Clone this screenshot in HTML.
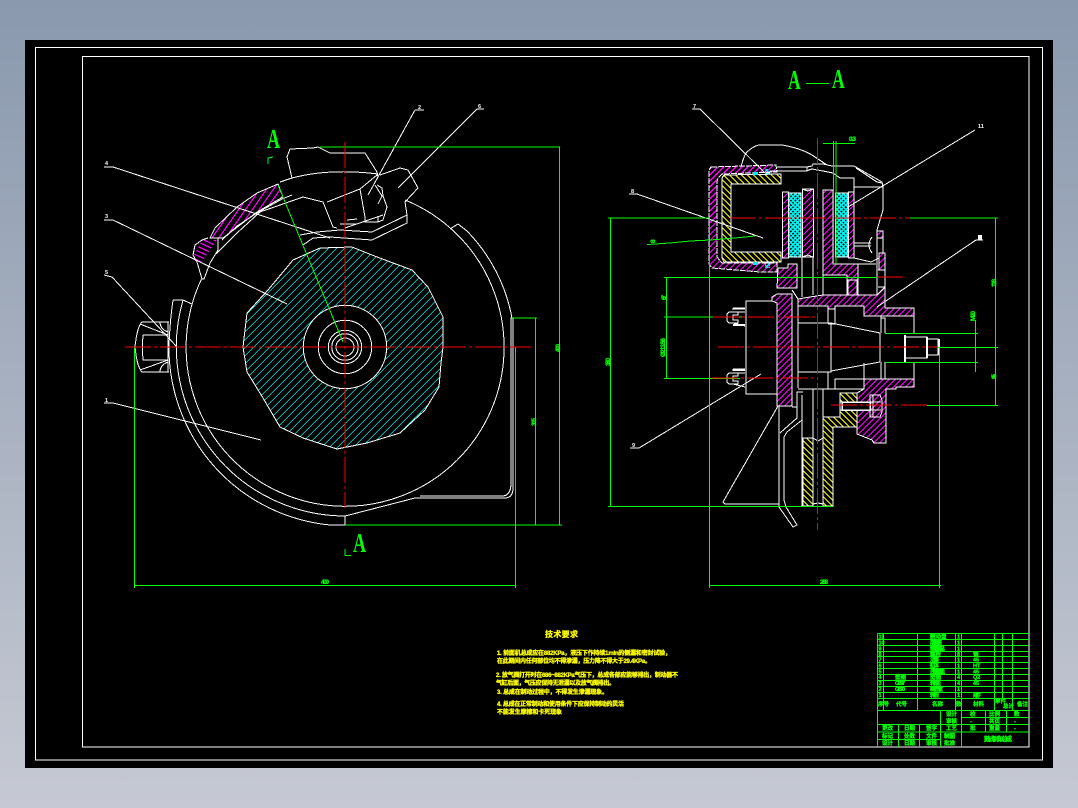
<!DOCTYPE html>
<html><head><meta charset="utf-8"><title>CAD</title>
<style>
html,body{margin:0;padding:0;width:1078px;height:808px;overflow:hidden;background:linear-gradient(#8a99ae,#c6c9d3)}
svg{position:absolute;left:0;top:0}
text{font-family:"Liberation Sans","Noto Sans CJK SC",sans-serif;font-weight:bold}
.w{fill:none;stroke:#fff;stroke-width:1}
.g{fill:none;stroke:#0f0;stroke-width:1}
.r{fill:none;stroke:#f00;stroke-width:1;stroke-dasharray:26 3 3 3}
.t{fill:#0f0;stroke:#0f0;stroke-width:.3;font-size:5.5px}
.l{fill:#fff;font-size:5.5px}
.y{fill:#ff0;stroke:#ff0;stroke-width:.3;font-size:6px}
.dim{fill:#0f0;stroke:#0f0;stroke-width:.3;font-size:6.5px}
.big{font-family:"Liberation Serif",serif;font-size:27px;fill:#0f0}
</style></head><body>
<svg width="1078" height="808" viewBox="0 0 1078 808" shape-rendering="crispEdges" xmlns="http://www.w3.org/2000/svg">
<defs>
<clipPath id="cc"><path d="M243 347L247 313L268 290L293 260L320 248L352 247L377 257L412 270L428 287L443 317L443 347L441 363L439 387L425 410L400 433L367 443L337 449L303 438L280 427L263 398L247 372Z"/></clipPath>
<clipPath id="cm1"><path d="M210 238L215 228L237 207L257 193L278 184L283 197L257 212L223 238Z"/></clipPath>
<clipPath id="cm2"><path d="M193 257L202 240L217 240L200 265Z"/></clipPath>
<clipPath id="cm">
<path d="M711 167L776 165L777 172L722 174L718 178L717 182L717 257L722 263L777 263L777 272L760 272L712 268L709 264L709 170Z"/>
<path d="M823 190L833 190L833 264L858 264L858 295L847 295L847 275L823 275Z"/>
<path d="M778 268L788 268L788 264L797 264L797 288L777 288Z"/>
<path d="M877 231H883V238H877Z"/>
<path d="M879 253H885V270H879Z"/>
<path d="M798 299L810 297L823 295L877 295L885 287L885 308L914 308L914 316L864 316L864 306L835 306L835 309L828 309L828 306L798 306Z"/>
<path d="M864 379L914 379L914 387L896 387L896 389L886 389L886 443L874 443L872 440L857 434L857 393L864 389Z"/>
<path d="M848 280H857V295H848Z"/>
<path d="M772 297L777 294L792 294L792 406L777 406L777 303L772 301Z"/>
</clipPath>
<clipPath id="cy">
<path d="M724 175L781 174L781 184L731 184L731 252L781 252L781 262L724 262L722 258L722 178Z"/>
<path d="M840 393H857V402H840Z"/>
<path d="M840 410H857V427H833V506H823V417H840Z"/>
<rect x="803" y="438" width="10" height="68"/>
</clipPath>
<clipPath id="cx">
<rect x="788.5" y="193" width="12.5" height="64"/>
<rect x="835.5" y="193" width="12.5" height="64"/>
<rect x="765" y="169" width="5" height="6"/>
<rect x="765" y="262" width="5" height="6"/>
</clipPath>
</defs>
<rect x="25" y="40" width="1028" height="728" fill="#000"/>
<rect x="35.5" y="47.5" width="1007" height="712.5" fill="none" stroke="#fff"/>
<rect x="82.5" y="56.5" width="946.5" height="690.5" fill="none" stroke="#fff"/>

<!-- LEFT VIEW -->
<path clip-path="url(#cc)" d="M180 180L520 520" stroke="#0ee" stroke-width="500" stroke-dasharray=".8 4.86" fill="none"/>
<path d="M243 347L247 313L268 290L293 260L320 248L352 247L377 257L412 270L428 287L443 317L443 347L441 363L439 387L425 410L400 433L367 443L337 449L303 438L280 427L263 398L247 372Z" fill="none" stroke="#fff"/>
<circle cx="345" cy="347" r="41.7" fill="#000" stroke="#fff"/>
<circle cx="345" cy="347" r="26.7" class="w"/>
<circle cx="345" cy="347" r="16.7" class="w"/>
<circle cx="345" cy="347" r="13.3" class="w"/>
<circle cx="345" cy="347" r="9" class="w"/>
<path class="w" d="M405 200A159 159 0 1 1 202 278"/>
<path class="w" d="M183 300A169 169 0 0 0 345 516L349 515L415 498L506 498Q513 497 513 488L513 318"/>
<path class="w" d="M420 496L502 496Q511 496 511 483L511 318L513 318"/>
<path class="w" d="M173 300Q170 320 169 345A178 178 0 0 0 330 525L345 525L345 516"/>
<path class="w" d="M173 300L183 300L192 304"/>
<path class="w" d="M450 229L458 224L467 231A169 169 0 0 1 512 318"/>
<!-- bolt -->
<path class="w" d="M169 322L142 322Q137 327 135 347Q137 367 142 372L169 372M143 335L168 335L168 360L143 360Q142 347 143 335M140 324L168 335M140 370L168 360M168 322L168 335M168 360L168 372M160 372Q160 365 168 362M160 322Q160 329 168 332"/>
<!-- top cap -->
<path class="w" d="M292 178L287 157L290 149L313 148L318 147L330 153L365 153L377 172L378 177"/>
<path class="w" d="M280 182L292 178Q330 168 378 174"/>
<path class="w" d="M380 175L400 168L408 170L418 188L405 202L407 215L407 223L372 240L330 237L313 238L303 245"/>
<path class="w" d="M407 215L372 232L340 230L317 232L300 235"/>
<path clip-path="url(#cm1)" d="M185 168L305 252" stroke="#f0f" stroke-width="120" stroke-dasharray="1.2 4.4" fill="none"/>
<path clip-path="url(#cm2)" d="M212 220L190 268" stroke="#f0f" stroke-width="70" stroke-dasharray="1.2 3" fill="none"/>
<path class="w" d="M210 238L215 228L237 207L257 193L278 184L283 197L257 212L223 238Z"/>
<path class="w" d="M208 238L202 240L195 245L193 255L197 262L202 279L204 279L210 263L218 250L218 238M222 240L237 226L257 213L282 199L292 195M216 254L237 233L260 212L303 197L323 202L333 227L337 228"/>
<path class="w" d="M327 202L360 189L365 217L365 222L378 222L378 216M360 189L377 175M377 185L382 188L383 196L387 207L383 220L378 222M375 185L382 196L378 204M345 228L383 215M347 220L357 219M340 224L357 224"/>
<!-- leaders left -->
<path class="w" d="M104 167L113 167L330 238M104 220L113 220L287 304M104 275L112 277L177 347M415 110L424 110M415 110L368 195M477 109L484 109M477 109L398 188M104 403L113 403L261 440"/>
<text class="l" x="105" y="165">4</text><text class="l" x="105" y="218">3</text><text class="l" x="105" y="274">5</text><text class="l" x="418" y="109">2</text><text class="l" x="478" y="108">6</text><text class="l" x="105" y="402">1</text>
<!-- green left -->
<path class="g" d="M320 147L560 147M559.5 147L559.5 525M345 525L562 525M535.5 318L535.5 525M512 318L537 318M134.5 347L134.5 588M515.5 347L515.5 588M134 585.5L516 585.5M278 185L343 342M268 164L268 158L273 157M345 549L345 555.5L351 555.5"/>
<text class="big" transform="translate(267 148) scale(.67 1)">A</text>
<text class="big" transform="translate(353 552) scale(.67 1)">A</text>
<text class="dim" x="321" y="584" textLength="8">400</text>
<text class="dim" transform="translate(536 426) rotate(-90)" textLength="8">305</text>
<text class="dim" transform="translate(560 352) rotate(-90)" textLength="8">400</text>
<path class="r" d="M125 347H531M345 142V508"/>

<!-- TITLE A-A -->
<text class="big" transform="translate(788 89) scale(.65 1)">A</text>
<text class="big" transform="translate(832 88) scale(.65 1)">A</text>
<path class="g" d="M806 83.5H829"/>

<!-- RIGHT VIEW -->
<path class="w" d="M741 167Q744 155 747 152Q755 145 760 145L782 145Q800 148 812 155L827 165"/>
<path clip-path="url(#cm)" d="M560 60L1010 510" stroke="#f0f" stroke-width="900" stroke-dasharray="1.2 3.04" fill="none"/>
<path clip-path="url(#cy)" d="M560 600L1010 150" stroke="#ff0" stroke-width="900" stroke-dasharray="1.2 3.04" fill="none"/>
<path clip-path="url(#cx)" d="M560 60L1010 510" stroke="#0ee" stroke-width="900" stroke-dasharray="1.6 1.5" fill="none"/>
<path clip-path="url(#cx)" d="M560 600L1010 150" stroke="#0ee" stroke-width="900" stroke-dasharray="1.6 1.5" fill="none"/>
<!-- narrow friction-disc hatching drawn explicitly -->
<path fill="none" stroke="#f0f" d="M803 199l10-10M803 205l10-10M803 211l10-10M803 217l10-10M803 223l10-10M803 229l10-10M803 235l10-10M803 241l10-10M803 247l10-10M803 253l10-10M806 256l7-7"/>
<path fill="none" stroke="#f0f" d="M783 198l5-5M783 204l5-5M783 210l5-5M783 216l5-5M783 222l5-5M783 228l5-5M783 234l5-5M783 240l5-5M783 246l5-5M783 252l5-5M783 258l5-5"/>
<path fill="none" stroke="#f0f" d="M849 198l5-5M849 204l5-5M849 210l5-5M849 216l5-5M849 222l5-5M849 228l5-5M849 234l5-5M849 240l5-5M849 246l5-5M849 252l5-5M849 258l5-5"/>
<path class="w" stroke-dasharray="6 1" d="M711 167L776 165L777 172L722 174L718 178L717 182L717 257L722 263L777 263L777 272L760 272L712 268L709 264L709 170Z"/>
<path class="w" d="M724 175L781 174L781 184L731 184L731 252L781 252L781 262L724 262L722 258L722 178Z"/>
<rect x="753" y="172" width="5" height="3" fill="#0ee"/>
<rect x="753" y="262" width="5" height="3" fill="#0ee"/>
<rect x="782.5" y="192" width="6" height="66" class="w"/>
<rect x="788.5" y="193" width="12.5" height="64" class="w"/>
<rect x="802.5" y="189" width="11" height="68" class="w"/>
<rect x="835.5" y="193" width="12.5" height="64" class="w"/>
<rect x="848.5" y="192" width="5.5" height="66" class="w"/>
<path class="w" d="M823 190L833 190L833 264L858 264L858 295L847 295L847 275L823 275Z"/>
<path class="w" d="M778 268L788 268L788 264L797 264L797 288L777 288Z"/>
<path class="w" d="M777 167L807 167L807 171L777 171M807 167L812 166L813 164L823 164L832 166L854 166L882 182L883 187L883 210L880 220L877 230M770 171L806 171L812 169L823 171L833 173L840 178L854 178L854 258M856 168L877 182L882 183M854 187L883 187"/>
<path class="w" d="M802 257V297M813 257V295M823 275V295M802 189L808 191L813 189M802 257L808 255L813 257"/>
<path class="w" d="M877 231H883V238H877Z"/>
<path class="w" d="M879 253H885V270H879Z"/>
<path class="w" d="M854 243L871 243M854 246L871 246M872 237Q866 245 872 253M877 230L877 295M883 238L883 253M854 264L876 264M854 258L871 262L879 258M878 270H885V287H878"/>
<path class="w" d="M798 299L810 297L823 295L877 295L885 287L885 308L914 308L914 316L885 316L881 316L864 316L864 306L835 306L835 309L828 309L828 306L798 306Z"/>
<path class="w" d="M864 379L914 379L914 387L896 387L896 389L886 389L886 443L874 443L872 440L857 434L857 393L864 389Z"/>
<path class="w" d="M848 280H857V295H848Z"/>
<path class="w" d="M772 297L777 294L792 294L792 406L777 406L777 303L772 301Z"/>
<path class="w" d="M772 301L746 301L746 394L777 394"/>
<path class="w" d="M792 290L798 299L798 388M798 306H828V323H798M798 323H831V372H798M798 372H828V389H798M828 309H835V324H828M835 306H864V316M831 323L880 333M831 371L880 362M864 316H881V333M881 318H885V333M880 333V362M914 316V333M914 362V379M881 362V379H885V362M864 363V379H835V389H828V372M835 389H864"/>
<path class="w" d="M840 393H857V402H840Z"/>
<path class="w" d="M840 410H857V427H833V506H823V417H840Z"/>
<rect x="803" y="438" width="10" height="68" class="w"/>
<path d="M842 402H870V410H842Z" fill="#000" stroke="#fff" stroke-width="1.5"/>
<path class="w" d="M840 402V410M870 395H880L882 400V412L880 417H870ZM873 395V417M870 402H881M870 410H881"/>
<path class="w" d="M778 406L723 502L725 504L779 504M779 406V507M779 507L793 527L797 525L786 507L784 500L784 437L787 432L802 420M780 433L797 418L797 392L803 392M792 407H797M802 395V506M813 389V438M823 389V417M813 438L818 441L823 438M813 504L818 503L823 504M802 389H823"/>
<path class="w" d="M745 309H732M745 312H729L727 314V321L729 323H738V320H733V315H738V312M733 308H745M733 323L745 326"/><rect x="733" y="324" width="12" height="2" fill="#fff"/>
<path class="w" d="M745 370H732M745 373H729L727 375V382L729 384H738V381H733V376H738V373M733 369H745M733 384L745 387"/><rect x="733" y="369" width="12" height="2" fill="#fff"/>
<!-- shaft end -->
<path fill="none" stroke="#fff" stroke-width="1" d="M905 337H927V358H905M927 339H938V355H927"/>
<path fill="none" stroke="#fff" stroke-width="2" d="M905 335V362M927 337V358M939 339V355"/>
<!-- leaders right -->
<path class="w" d="M692 109H700L765 173M629 194H637L763 238M630 448H639L761 374M975 130L848 207M976 240H983M976 240L877 307"/>
<text class="l" x="693" y="108">7</text><text class="l" x="631" y="193">8</text><text class="l" x="632" y="447">9</text><text class="l" x="978" y="128">11</text><rect x="978" y="235" width="4" height="5" fill="#fff"/>
<!-- green right -->
<path class="g" d="M610.5 218V507M608 218H710M608 506.5H833M709.5 218V588M709 585.5H941M939.5 347V588M664 317H745M666.5 277V379M664 277.5H877M664 378.5H740M833.5 141V264M836 141V264M823 143.5H855M647 244.5L670 243L690 241L710 240L735 238L755 236M910 218H998M995.5 218V405M927 405.5H998M975.5 320V372M885 333.5H978M885 362.5H978M938 347.5H998"/>
<text class="dim" transform="translate(610 366) rotate(-90)" textLength="8">380</text>
<text class="dim" x="820" y="584" textLength="8">288</text>
<text class="dim" transform="translate(665 357) rotate(-90)" textLength="19">Ø213.56</text>
<text class="dim" transform="translate(666 300) rotate(-90)" textLength="5">67</text>
<text class="dim" transform="translate(655 243) rotate(-90)">8</text>
<text class="dim" x="849" y="141" textLength="7">0.3</text>
<text class="dim" transform="translate(996 287) rotate(-90)" textLength="8">118</text>
<text class="dim" transform="translate(996 379) rotate(-90)" textLength="5">85</text>
<text class="dim" transform="translate(975 321) rotate(-90)" textLength="10">M20</text>
<path class="r" d="M730 218H910M877 277H905M713 317H815M718 347H938M712 378H815M831 405H927M817.5 138V530"/>

<!-- TECH TEXT -->
<text class="y" x="545" y="637" textLength="33" style="font-size:8px">技术要求</text>
<text class="y" x="497" y="655" textLength="174">1. 前面机总成应在882KPa，液压下作持续1min的侧漏和密封试验，</text>
<text class="y" x="497" y="663" textLength="154">在此期间内任何部位均不得渗漏，压力降不得大于29.4KPa。</text>
<text class="y" x="496" y="677" textLength="182">2. 放气阀打开时在686~882KPa气压下，总成各部应能够排出，制动器不</text>
<text class="y" x="496" y="685" textLength="119">气缸后面，气压应保持无泄漏以及放气阀排出。</text>
<text class="y" x="497" y="694" textLength="111">3. 总成在制动过程中，不得发生渗漏现象。</text>
<text class="y" x="497" y="706" textLength="127">4. 总成在正常制动和使用条件下应保持制动的灵活</text>
<text class="y" x="497" y="714" textLength="65">不能发生摩擦和卡死现象</text>

<!-- TITLE BLOCK -->
<path class="g" d="M877.5 633.5H1029M877.5 639.5H1029M877.5 645.5H1029M877.5 651.5H1029M877.5 656.5H1029M877.5 662.5H1029M877.5 668.5H1029M877.5 674.5H1029M877.5 680.5H1029M877.5 686.5H1029M877.5 692.5H1029M877.5 698.5H1029M877.5 710.5H1029M883.5 633.5V710M917.5 633.5V710M955.5 633.5V710M961.5 633.5V747M994.5 633.5V710M1002.5 633.5V698M1012.5 633.5V710M877.5 633.5V747M877.5 724.5H961M877.5 732H961M877.5 739.5H940M898.5 724.5V747M919.5 724.5V747M940.5 710V747M961.5 717.5H1029M961.5 724.5H1029M961.5 732H1029M985.5 710V732M1006.5 710V732"/>
<g>
<text class="t" x="930" y="638.5">制动盘</text><text class="t" x="930" y="644.5" textLength="12">摩擦片座</text><text class="t" x="930" y="650.5" textLength="15">制动钳体总</text><text class="t" x="930" y="656">螺栓</text><text class="t" x="930" y="661.5" textLength="9">活塞</text><text class="t" x="930" y="667.5" textLength="9">缸体</text><text class="t" x="930" y="673.5" textLength="15">连接螺栓组</text><text class="t" x="930" y="679">垫圈</text><text class="t" x="930" y="685" textLength="11">轮毂盖</text><text class="t" x="930" y="691" textLength="13">制动气室</text><text class="t" x="930" y="697" textLength="9">轮毂</text>
<text class="t" x="878.5" y="638.5">11</text><text class="t" x="878.5" y="644.5">10</text><text class="t" x="878.5" y="650.5">9</text><text class="t" x="878.5" y="656">8</text><text class="t" x="878.5" y="661.5">7</text><text class="t" x="878.5" y="667.5">6</text><text class="t" x="878.5" y="673.5">5</text><text class="t" x="878.5" y="679">4</text><text class="t" x="878.5" y="685">3</text><text class="t" x="878.5" y="691">2</text><text class="t" x="878.5" y="697">1</text>
<text class="t" x="957" y="638.5">1</text><text class="t" x="957" y="644.5">1</text><text class="t" x="957" y="650.5">1</text><text class="t" x="957" y="656">8</text><text class="t" x="957" y="661.5">1</text><text class="t" x="957" y="667.5">1</text><text class="t" x="957" y="673.5">1</text><text class="t" x="957" y="679">4</text><text class="t" x="957" y="685">4</text><text class="t" x="957" y="691">1</text><text class="t" x="957" y="697">1</text>
<text class="t" x="973" y="656">钢</text><text class="t" x="973" y="661.5">45</text><text class="t" x="973" y="667.5">HT</text><text class="t" x="973" y="673.5">45</text><text class="t" x="973" y="679">Q2</text><text class="t" x="973" y="685">45</text><text class="t" x="973" y="697" textLength="8">组件</text>
<text class="t" x="895" y="679">垫圈</text><text class="t" x="895" y="685" textLength="10">GB97</text><text class="t" x="895" y="691" textLength="10">GB70</text>
<text class="t" x="878" y="706">序号</text><text class="t" x="896" y="706">代号</text><text class="t" x="932" y="706">名称</text><text class="t" x="956" y="706">数</text><text class="t" x="973" y="706">材料</text><text class="t" x="995" y="703">单件</text><text class="t" x="1003" y="708">总计</text><text class="t" x="1017" y="706">备注</text>
<text class="t" x="946" y="716">设计</text><text class="t" x="970" y="716">校</text><text class="t" x="989" y="716">比例</text><text class="t" x="1014" y="716">数</text>
<text class="t" x="946" y="723">审核</text><text class="t" x="970" y="723">-</text><text class="t" x="989" y="723">共页</text><text class="t" x="1014" y="723">-</text>
<text class="t" x="946" y="730">工艺</text><text class="t" x="970" y="730">批</text><text class="t" x="989" y="730">重量</text><text class="t" x="1014" y="730">-</text>
<text class="t" x="882" y="730">更改</text><text class="t" x="904" y="730">日期</text><text class="t" x="926" y="730">签字</text>
<text class="t" x="882" y="738">标记</text><text class="t" x="904" y="738">处数</text><text class="t" x="926" y="738">文件</text>
<text class="t" x="882" y="745">设计</text><text class="t" x="904" y="745">日期</text><text class="t" x="926" y="745">审核</text>
<text class="t" x="944" y="738">制图</text><text class="t" x="944" y="745">批准</text>
</g>
<text x="984" y="741" fill="#0f0" stroke="#0f0" stroke-width=".3" style="font-size:6.5px" textLength="28">鼓式刹车总成</text>
</svg>
</body></html>
